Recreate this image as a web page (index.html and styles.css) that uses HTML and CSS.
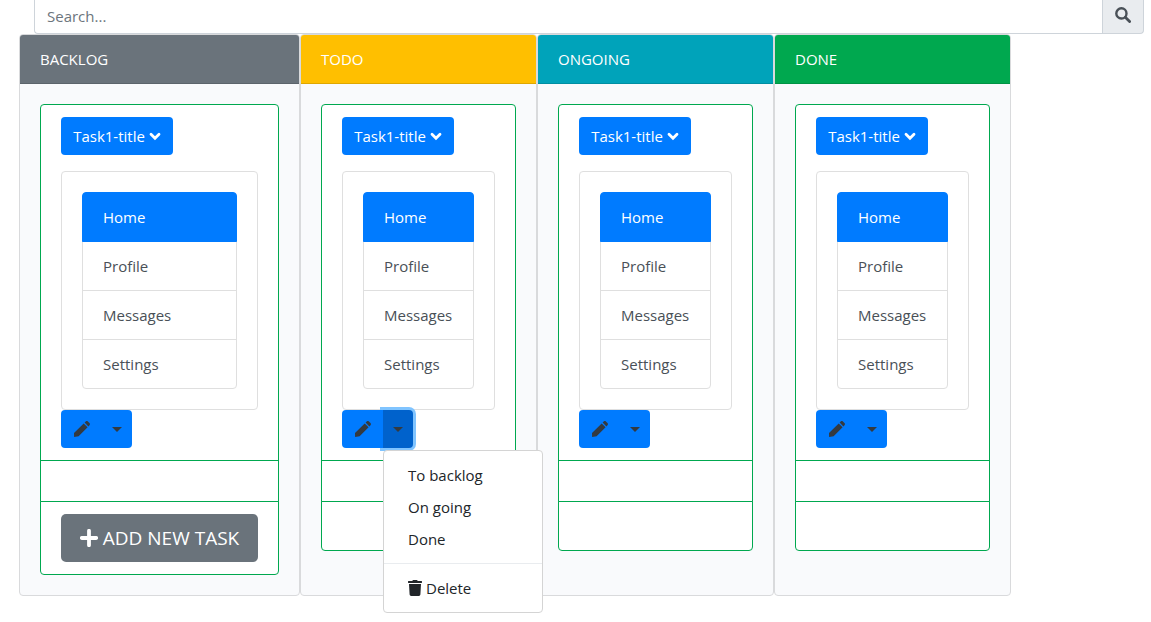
FILE: index.html
```html
<!DOCTYPE html>
<html lang="en">
<head>
<meta charset="utf-8">
<meta name="viewport" content="width=device-width, initial-scale=1">
<title>Task board</title>
<link rel="stylesheet" href="styles.css">
</head>
<body>
<svg class="sprite" aria-hidden="true">
  <symbol id="i-down" viewBox="0 0 12 12"><path d="M2 4.2 6 8.2 10 4.2" fill="none" stroke="currentColor" stroke-width="2.8" stroke-linecap="round" stroke-linejoin="miter"/></symbol>
  <symbol id="i-pen" viewBox="0 0 16 16"><path d="M9.7 2.4 13.6 6.3 4.6 15.2 .1 16 0 11.9zM10.6 1.6 11.7.5C12.4-.1 13.3-.1 13.9.5L15.5 2.1C16.1 2.7 16.1 3.6 15.5 4.3L14.4 5.4z" fill="currentColor"/></symbol>
  <symbol id="i-search" viewBox="0 0 16 16"><circle cx="6.4" cy="6.4" r="5.1" fill="none" stroke="currentColor" stroke-width="2.4"/><path d="M10.3 10.3 14.6 14.6" stroke="currentColor" stroke-width="2.8" stroke-linecap="round"/></symbol>
  <symbol id="i-plus" viewBox="0 0 18 18"><path d="M9 1.8V16.2M1.8 9H16.2" stroke="currentColor" stroke-width="3.8" stroke-linecap="round"/></symbol>
  <symbol id="i-trash" viewBox="0 0 14 16"><path d="M.4 1H4.2L4.8.2Q5 0 5.3 0H8.7Q9 0 9.2.2L9.8 1H13.6Q14 1 14 1.4V2.6Q14 3 13.6 3H.4Q0 3 0 2.6V1.4Q0 1 .4 1zM1 4H13L12.4 14.6Q12.3 16 10.9 16H3.1Q1.7 16 1.6 14.6z" fill="currentColor"/></symbol>
</svg>

<form class="search" role="search">
  <input class="search-input" type="search" placeholder="Search..." aria-label="Search">
  <button class="search-button" type="button" aria-label="Search"><svg class="icon"><use href="#i-search"/></svg></button>
</form>

<main class="board">
  <section class="column column-wide">
    <h2 class="column-header backlog">BACKLOG</h2>
    <div class="column-body">
      <ul class="tasks">
        <li class="task">
          <button class="btn title" type="button">Task1-title <svg class="chevron"><use href="#i-down"/></svg></button>
          <div class="card">
            <nav class="links">
              <a class="link active" href="#home">Home</a>
              <a class="link" href="#profile">Profile</a>
              <a class="link" href="#messages">Messages</a>
              <a class="link" href="#settings">Settings</a>
            </nav>
          </div>
          <div class="actions">
            <button class="btn edit" type="button" aria-label="Edit"><svg class="icon"><use href="#i-pen"/></svg></button>
            <button class="btn toggle" type="button" aria-label="Move task"><span class="caret"></span></button>
          </div>
        </li>
        <li class="task task-empty"></li>
        <li class="task"><button class="btn add" type="button"><svg class="plus"><use href="#i-plus"/></svg>ADD NEW TASK</button></li>
      </ul>
    </div>
  </section>

  <section class="column">
    <h2 class="column-header todo">TODO</h2>
    <div class="column-body">
      <ul class="tasks">
        <li class="task">
          <button class="btn title" type="button">Task1-title <svg class="chevron"><use href="#i-down"/></svg></button>
          <div class="card">
            <nav class="links">
              <a class="link active" href="#home">Home</a>
              <a class="link" href="#profile">Profile</a>
              <a class="link" href="#messages">Messages</a>
              <a class="link" href="#settings">Settings</a>
            </nav>
          </div>
          <div class="actions">
            <button class="btn edit" type="button" aria-label="Edit"><svg class="icon"><use href="#i-pen"/></svg></button>
            <div class="dropdown">
              <button class="btn toggle open" type="button" aria-label="Move task" aria-expanded="true"><span class="caret"></span></button>
              <div class="menu">
                <a class="menu-item" href="#backlog">To backlog</a>
                <a class="menu-item" href="#ongoing">On going</a>
                <a class="menu-item" href="#done">Done</a>
                <hr class="divider">
                <a class="menu-item" href="#delete"><svg class="trash"><use href="#i-trash"/></svg>Delete</a>
              </div>
            </div>
          </div>
        </li>
        <li class="task task-empty"></li>
        <li class="task task-last"></li>
      </ul>
    </div>
  </section>

  <section class="column">
    <h2 class="column-header ongoing">ONGOING</h2>
    <div class="column-body">
      <ul class="tasks">
        <li class="task">
          <button class="btn title" type="button">Task1-title <svg class="chevron"><use href="#i-down"/></svg></button>
          <div class="card">
            <nav class="links">
              <a class="link active" href="#home">Home</a>
              <a class="link" href="#profile">Profile</a>
              <a class="link" href="#messages">Messages</a>
              <a class="link" href="#settings">Settings</a>
            </nav>
          </div>
          <div class="actions">
            <button class="btn edit" type="button" aria-label="Edit"><svg class="icon"><use href="#i-pen"/></svg></button>
            <button class="btn toggle" type="button" aria-label="Move task"><span class="caret"></span></button>
          </div>
        </li>
        <li class="task task-empty"></li>
        <li class="task task-last"></li>
      </ul>
    </div>
  </section>

  <section class="column">
    <h2 class="column-header done">DONE</h2>
    <div class="column-body">
      <ul class="tasks">
        <li class="task">
          <button class="btn title" type="button">Task1-title <svg class="chevron"><use href="#i-down"/></svg></button>
          <div class="card">
            <nav class="links">
              <a class="link active" href="#home">Home</a>
              <a class="link" href="#profile">Profile</a>
              <a class="link" href="#messages">Messages</a>
              <a class="link" href="#settings">Settings</a>
            </nav>
          </div>
          <div class="actions">
            <button class="btn edit" type="button" aria-label="Edit"><svg class="icon"><use href="#i-pen"/></svg></button>
            <button class="btn toggle" type="button" aria-label="Move task"><span class="caret"></span></button>
          </div>
        </li>
        <li class="task task-empty"></li>
        <li class="task task-last"></li>
      </ul>
    </div>
  </section>
</main>
</body>
</html>
```
FILE: styles.css
```css
* { box-sizing: border-box; }

body {
  min-height: 100vh;
  margin: 0;
  background: #fff;
  color: #212529;
  font: 15px/24px "Segoe UI", "Open Sans", "Noto Sans", sans-serif;
}

button, input { font: inherit; }

.sprite { display: none; }
.icon { display: block; width: 16px; height: 16px; }

.search { display: flex; padding: 0 7px 0 34px; }

.search-input {
  flex: 1;
  min-width: 0;
  height: 34px;
  padding: 0 12px 2px;
  border: 1px solid #ced4da;
  border-top: 0;
  border-right: 0;
  border-radius: 0 0 0 4px;
  background: #fff;
  color: #495057;
  appearance: none;
  outline: 0;
}

.search-input::placeholder { color: #6c757d; opacity: 1; }

.search-button {
  display: flex;
  padding: 7px 12px;
  border: 1px solid #ced4da;
  border-top: 0;
  border-radius: 0 0 4px 0;
  background: #e9ecef;
  color: #495057;
}

.board { display: flex; padding: 0 19px; }

.column {
  flex: 0 0 237px;
  border: 1px solid #d9dadc;
  border-radius: 4px;
  background: #f9fafc;
}

.column-wide { flex-basis: 281px; }

.column-header {
  margin: 0;
  padding: 12px 20px;
  border-bottom: 1px solid rgba(0, 0, 0, 0.125);
  border-radius: 3px 3px 0 0;
  color: #fff;
  font-size: 15px;
  font-weight: 400;
}

.backlog { background: #6a737b; }
.todo { background: #ffbf00; }
.ongoing { background: #00a3ba; }
.done { background: #00a84f; }

.column-body { padding: 20px; }

.tasks { margin: 0; padding: 0; list-style: none; }

.task {
  padding: 12px 20px;
  border: 1px solid #00a84f;
  background: #fff;
}

.task + .task { margin-top: -1px; }
.task:first-child { border-radius: 4px 4px 0 0; }
.task:last-child { border-radius: 0 0 4px 4px; }
.task-empty { min-height: 42px; }
.task-last { min-height: 50px; }

.btn {
  display: flex;
  align-items: center;
  justify-content: center;
  height: 38px;
  padding: 0 12px;
  border: 0;
  border-radius: 4px;
  background: #007bff;
  color: #fff;
  white-space: nowrap;
}

.title { gap: 4px; min-width: 112px; }
.chevron { width: 12px; height: 12px; }

.card {
  margin-top: 16px;
  padding: 20px;
  border: 1px solid #dfdfdf;
  border-radius: 4px;
}

.links { display: flex; flex-direction: column; }

.link {
  padding: 12px 20px;
  border: 1px solid #dfdfdf;
  color: #495057;
  text-decoration: none;
}

.link + .link { margin-top: -1px; }
.link:first-child { border-radius: 4px 4px 0 0; }
.link:last-child { border-radius: 0 0 4px 4px; }

.link.active {
  z-index: 1;
  border-color: #007bff;
  background: #007bff;
  color: #fff;
}

.actions { display: flex; }

.edit, .toggle { color: #343a40; }
.edit { z-index: 1; width: 41px; border-radius: 4px 0 0 4px; }
.toggle { width: 30px; padding: 0; border-radius: 0 4px 4px 0; }

.toggle.open {
  background: #0062cc;
  box-shadow: 0 0 0 3px #80c4ff;
}

.caret {
  border: 5px solid transparent;
  border-top-color: #343a40;
  border-bottom: 0;
}

.dropdown { position: relative; }

.menu {
  position: absolute;
  top: 100%;
  left: 0;
  min-width: 160px;
  margin-top: 2px;
  padding: 8px 0;
  border: 1px solid #d4d4d4;
  border-radius: 4px;
  background: #fff;
  z-index: 10;
}

.menu-item {
  display: flex;
  align-items: center;
  gap: 4px;
  padding: 4px 24px;
  color: #212529;
  text-decoration: none;
}

.divider { margin: 8px 0; border: 0; border-top: 1px solid #e9ecef; }
.trash { width: 14px; height: 16px; }

.add {
  gap: 5px;
  width: 100%;
  height: 48px;
  border-radius: 5px;
  background: #6a737b;
  font-size: 19px;
}

.plus { width: 18px; height: 18px; }
```
